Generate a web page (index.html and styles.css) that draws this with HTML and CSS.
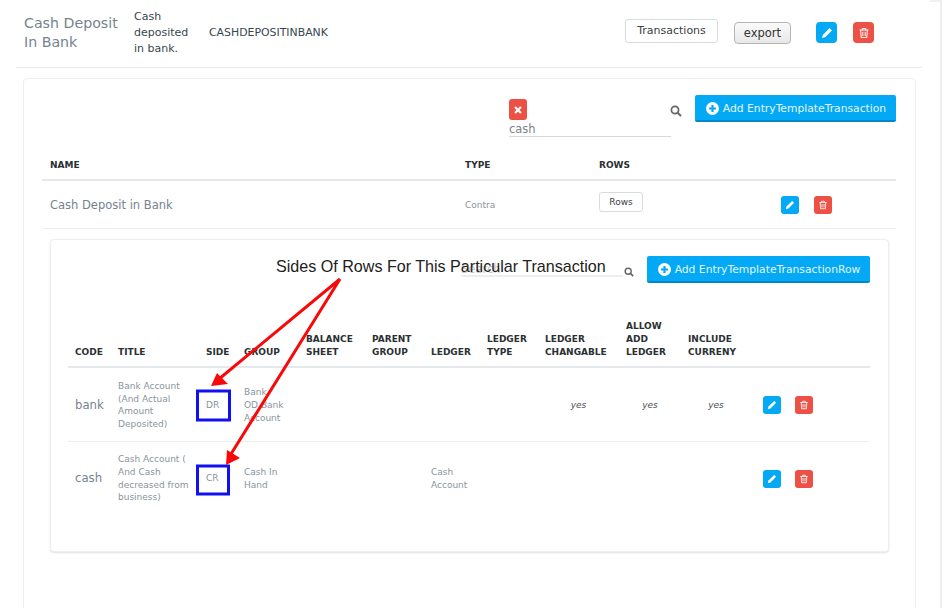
FILE: index.html
```html
<!DOCTYPE html>
<html lang="en">
<head>
    <meta charset="UTF-8">
    <meta name="viewport" content="width=device-width, initial-scale=1.0">
    <title>Entry Templates</title>
    <link rel="stylesheet" href="styles.css">
</head>
<body>
<svg class="sprite" width="0" height="0">
    <symbol id="pencil" viewBox="0 0 12 12"><path fill="#fff" d="M8.6 1.1 10.9 3.4 4.1 10.2 1 11 1.8 7.9Z"/></symbol>
    <symbol id="trash" viewBox="0 0 12 12"><path fill="none" stroke="#fff" stroke-width="1" d="M1.5 3h9M4.3 3V1.5h3.4V3M2.7 3l.4 7.5h5.8L9.300 3M4.800 4.800v4.200M7.200 4.800v4.200"/></symbol>
    <symbol id="times" viewBox="0 0 12 12"><path fill="none" stroke="#fff" stroke-width="2.600" d="M2.500 2.500 9.500 9.500M9.500 2.500 2.500 9.500"/></symbol>
    <symbol id="search" viewBox="0 0 12 12"><circle cx="5" cy="5" r="3.600" fill="none" stroke="#666" stroke-width="1.700"/><path stroke="#666" stroke-width="2" d="M7.700 7.700 11 11"/></symbol>
    <symbol id="plus" viewBox="0 0 12 12"><circle cx="6" cy="6" r="6" fill="#fff"/><path stroke="#03a9f4" stroke-width="2" d="M6 2.700v6.600M2.700 6h6.600"/></symbol>
</svg>

<div class="page">
    <div class="template-row">
        <div class="template-name">Cash Deposit In Bank</div>
        <div class="template-desc">Cash deposited in bank.</div>
        <div class="template-code">CASHDEPOSITINBANK</div>
        <button class="btn-outline btn-transactions">Transactions</button>
        <button class="btn-export">export</button>
        <button class="icon-btn blue big"><svg><use href="#pencil"/></svg></button>
        <button class="icon-btn red big"><svg><use href="#trash"/></svg></button>
    </div>

    <div class="card outer-card">
        <div class="toolbar">
            <div class="search">
                <button class="icon-btn red clear"><svg><use href="#times"/></svg></button>
                <div class="search-input">cash</div>
            </div>
            <svg class="search-icon"><use href="#search"/></svg>
            <button class="btn-add"><svg><use href="#plus"/></svg>Add EntryTemplateTransaction</button>
        </div>

        <table class="outer-table">
            <colgroup>
                <col class="c-name"><col class="c-type"><col class="c-rows"><col>
            </colgroup>
            <thead>
                <tr><th>NAME</th><th>TYPE</th><th>ROWS</th><th></th></tr>
            </thead>
            <tbody>
                <tr>
                    <td class="name-cell">Cash Deposit in Bank</td>
                    <td>Contra</td>
                    <td><button class="btn-outline btn-rows">Rows</button></td>
                    <td class="actions">
                        <button class="icon-btn blue"><svg><use href="#pencil"/></svg></button>
                        <button class="icon-btn red"><svg><use href="#trash"/></svg></button>
                    </td>
                </tr>
            </tbody>
        </table>

        <div class="card inner-card">
            <div class="toolbar inner-toolbar">
                <div class="search-input placeholder">Search</div>
                <svg class="search-icon small"><use href="#search"/></svg>
                <button class="btn-add"><svg><use href="#plus"/></svg>Add EntryTemplateTransactionRow</button>
            </div>

            <table class="rows-table">
                <colgroup>
                    <col class="r1"><col class="r2"><col class="r3"><col class="r4"><col class="r5"><col class="r6">
                    <col class="r7"><col class="r8"><col class="r9"><col class="r10"><col class="r11"><col>
                </colgroup>
                <thead>
                    <tr>
                        <th>CODE</th><th>TITLE</th><th>SIDE</th><th>GROUP</th><th>BALANCE SHEET</th><th>PARENT GROUP</th>
                        <th>LEDGER</th><th>LEDGER TYPE</th><th>LEDGER CHANGABLE</th><th>ALLOW ADD LEDGER</th><th>INCLUDE CURRENY</th><th></th>
                    </tr>
                </thead>
                <tbody>
                    <tr>
                        <td class="code">bank</td>
                        <td>Bank Account (And Actual Amount Deposited)</td>
                        <td class="side">DR</td>
                        <td>Bank<br>OD Bank Account</td>
                        <td></td><td></td><td></td><td></td>
                        <td class="flag">yes</td><td class="flag">yes</td><td class="flag">yes</td>
                        <td class="actions">
                            <button class="icon-btn blue"><svg><use href="#pencil"/></svg></button>
                            <button class="icon-btn red"><svg><use href="#trash"/></svg></button>
                        </td>
                    </tr>
                    <tr>
                        <td class="code">cash</td>
                        <td>Cash Account ( And Cash decreased from business)</td>
                        <td class="side">CR</td>
                        <td>Cash In Hand</td>
                        <td></td><td></td>
                        <td>Cash Account</td>
                        <td></td><td></td><td></td><td></td>
                        <td class="actions">
                            <button class="icon-btn blue"><svg><use href="#pencil"/></svg></button>
                            <button class="icon-btn red"><svg><use href="#trash"/></svg></button>
                        </td>
                    </tr>
                </tbody>
            </table>
        </div>
    </div>

    <!-- annotation drawn over the screenshot -->
    <div class="note">Sides Of Rows For This Particular Transaction</div>
    <svg class="marks" viewBox="0 0 943 608">
        <rect class="mark-box" x="197.500" y="391" width="32" height="29"/>
        <rect class="mark-box" x="197.500" y="466" width="31" height="28"/>
        <path class="mark-line" d="M340 279 219 379M340 279 231 454"/>
        <path class="mark-head" d="M211 386 217 373 228 384ZM226 465 227 450 240 458Z"/>
    </svg>
</div>
</body>
</html>
```

FILE: styles.css
```css
html, body {
    margin: 0;
    padding: 0;
    background: #fff;
}
body {
    font-family: "DejaVu Sans", sans-serif;
    height: 608px;
    overflow: hidden;
}
button {
    font-family: inherit;
    cursor: pointer;
}
.sprite {
    position: absolute;
}
.page {
    position: relative;
    box-sizing: border-box;
    width: 942px;
    height: 608px;
    padding: 0 21px 0 16px;
    border-right: 2px solid #eeeeee;
}
.page::before {
    content: "";
    position: absolute;
    top: 0;
    right: 0;
    width: 10px;
    height: 2px;
    background: #f0f0f0;
}

/* top template row */
.template-row {
    display: flex;
    align-items: center;
    box-sizing: border-box;
    height: 68px;
    width: 906px;
    padding: 0 0 2px 8px;
    border-bottom: 1px solid #e8eaec;
}
.template-name {
    width: 110px;
    font-size: 14.200px;
    line-height: 19px;
    margin-top: 1px;
    color: #76838f;
}
.template-desc {
    width: 60px;
    margin: 1px 15px 0 0;
    font-size: 11px;
    line-height: 16px;
    color: #37474f;
}
.template-code {
    width: 416px;
    font-size: 10.900px;
    color: #37474f;
}
.btn-outline {
    background: #fff;
    border: 1px solid #d8dcdf;
    border-radius: 3px;
    color: #3a3f44;
    padding: 0;
}
.btn-transactions {
    width: 93px;
    height: 24px;
    margin-top: -4px;
    font-size: 11px;
}
.btn-export {
    width: 57px;
    height: 22px;
    margin-left: 16px;
    padding: 0;
    font-size: 11.500px;
    color: #333;
    background: linear-gradient(#fafafa, #e8e8e8);
    border: 1px solid #b5b5b5;
    border-radius: 4px;
}
.icon-btn {
    display: inline-flex;
    align-items: center;
    justify-content: center;
    width: 18px;
    height: 18px;
    padding: 0;
    border: none;
    border-radius: 3px;
}
.icon-btn svg {
    width: 10px;
    height: 10px;
}
.icon-btn.blue {
    background: #03a9f4;
}
.icon-btn.red {
    background: #ed5045;
}
.icon-btn.big {
    width: 21px;
    height: 21px;
    border-radius: 4px;
}
.icon-btn.big svg {
    width: 12px;
    height: 12px;
}
.template-row .blue {
    margin-left: 25px;
}
.template-row .red {
    margin-left: 16px;
}

/* cards */
.card {
    box-sizing: border-box;
    background: #fff;
    border: 1px solid #eeeeee;
    border-radius: 4px;
}
.outer-card {
    width: 893px;
    height: 560px;
    margin: 10px 0 0 7px;
    padding: 16px 19px 16px 18px;
}
.inner-card {
    width: 839px;
    height: 313px;
    margin: 10px 0 0 8px;
    padding: 16px 18px 16px 17px;
    box-shadow: 0 1px 2px rgba(0, 0, 0, 0.12);
}

/* search and add */
.toolbar {
    display: flex;
    align-items: flex-start;
    justify-content: flex-end;
    height: 52px;
}
.search {
    width: 162px;
    margin-top: 4px;
}
.icon-btn.clear {
    display: flex;
    height: 21px;
}
.search-input {
    box-sizing: border-box;
    width: 162px;
    height: 17px;
    padding-top: 1px;
    font-size: 11.500px;
    line-height: 17px;
    color: #76838f;
    border-bottom: 1px solid #d8d8d8;
}
.search-icon {
    width: 12px;
    height: 12px;
    margin: 10px 13px 0 -1px;
}
.btn-add {
    display: inline-flex;
    align-items: center;
    justify-content: center;
    box-sizing: border-box;
    width: 201px;
    height: 27px;
    padding: 2px 0 0 1px;
    color: #e3f5fe;
    font-size: 10.750px;
    background: #03a9f4;
    border: none;
    border-bottom: 2px solid #0288c9;
    border-radius: 2px;
}
.btn-add svg {
    width: 13px;
    height: 13px;
    margin-right: 4px;
}
.inner-toolbar {
    height: 64px;
}
.inner-toolbar .btn-add {
    width: 223px;
}
.inner-toolbar .search-input.placeholder {
    margin-top: 4px;
    padding-top: 2px;
    line-height: 14px;
    color: #c4c4c4;
    border-bottom-width: 2px;
    border-color: #eee;
}
.search-icon.small {
    width: 10px;
    height: 12px;
    margin: 10px 13px 0 1px;
}

/* tables */
table {
    border-collapse: collapse;
    table-layout: fixed;
}
th {
    text-align: left;
    vertical-align: bottom;
    font-weight: bold;
    color: #2b3033;
}
.outer-table {
    width: 854px;
}
.c-name { width: 415px; }
.c-type { width: 134px; }
.c-rows { width: 151px; }
.outer-table th {
    height: 33px;
    padding: 0 8px 7px;
    box-sizing: border-box;
    font-size: 9px;
    line-height: 13px;
    border-bottom: 2px solid #e6e9eb;
}
.outer-table td {
    height: 48px;
    padding: 2px 8px 0;
    box-sizing: border-box;
    font-size: 9px;
    color: #8a949c;
    border-bottom: 1px solid #eceeef;
}
.outer-table .name-cell {
    font-size: 11.500px;
    color: #76838f;
}
.outer-table .actions {
    padding-left: 39px;
}
.outer-table .actions .red {
    margin-left: 12px;
}
.btn-rows {
    display: block;
    width: 44px;
    height: 20px;
    margin-top: -6px;
    font-size: 9px;
}
.rows-table {
    width: 802px;
}
.r1 { width: 43px; }
.r2 { width: 88px; }
.r3 { width: 38px; }
.r4 { width: 62px; }
.r5 { width: 66px; }
.r6 { width: 59px; }
.r7 { width: 56px; }
.r8 { width: 58px; }
.r9 { width: 81px; }
.r10 { width: 62px; }
.r11 { width: 70px; }
.rows-table th {
    padding: 0 7px 7px;
    font-size: 9px;
    line-height: 13px;
    border-bottom: 2px solid #e6e9eb;
}
.rows-table td {
    padding: 0 7px;
    font-size: 9px;
    line-height: 12.700px;
    color: #8a949c;
    border-bottom: 1px solid #eceeef;
}
.rows-table tbody tr {
    height: 74px;
}
.rows-table tbody tr:first-child {
    height: 75px;
}
.rows-table tbody tr:first-child td {
    padding-top: 2px;
}
.rows-table tbody tr:last-child td {
    border-bottom: none;
}
.rows-table .code {
    font-size: 11.700px;
    color: #76838f;
}
.rows-table .flag {
    text-align: center;
    font-style: italic;
    color: #4a5257;
}
.rows-table .actions {
    padding-right: 0;
    padding-left: 12px;
}
.rows-table .actions .red {
    margin-left: 11px;
}

/* annotation */
.note {
    position: absolute;
    top: 256px;
    left: 276px;
    font-family: "Liberation Sans", Arial, sans-serif;
    font-size: 16.100px;
    line-height: 20px;
    color: #222;
    white-space: nowrap;
}
.marks {
    position: absolute;
    top: 0;
    left: 0;
    width: 943px;
    height: 608px;
    pointer-events: none;
}
.mark-box {
    fill: none;
    stroke: #1010f0;
    stroke-width: 3;
}
.mark-line {
    fill: none;
    stroke: #f80808;
    stroke-width: 3;
}
.mark-head {
    fill: #f80808;
}
```
